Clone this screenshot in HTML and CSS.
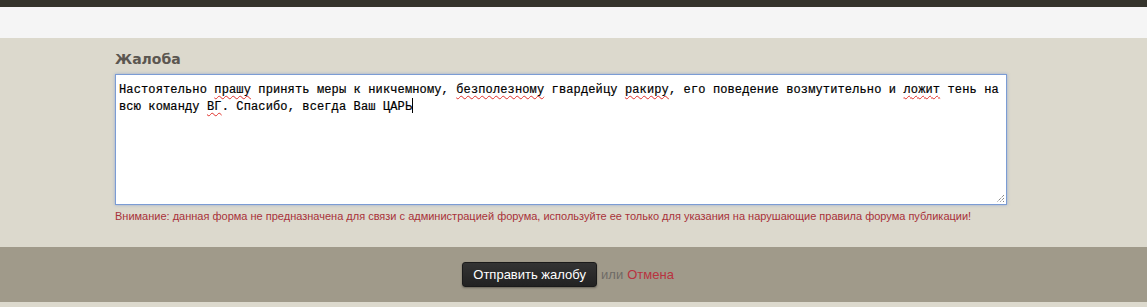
FILE: index.html
```html
<!DOCTYPE html>
<html lang="ru">
<head>
<meta charset="utf-8">
<link rel="stylesheet" href="styles.css">
</head>
<body>
<div class="topbar"></div>
<div class="subbar"></div>
<div class="main">
  <div class="form">
    <label class="label">Жалоба</label>
    <div class="textarea" role="textbox">Настоятельно <span class="err">прашу</span> принять меры к никчемному, <span class="err">безполезному</span> гвардейцу <span class="err">ракиру</span>, его поведение возмутительно и <span class="err">ложит</span> тень на всю команду <span class="err">ВГ</span>. Спасибо, всегда Ваш ЦАРЬ<span class="caret"></span><svg class="grip" width="9" height="9" viewBox="0 0 9 9"><path d="M8 1L1 8M8 4L4 8M8 7L7 8" stroke="#555" stroke-width="1" stroke-dasharray="1 1" fill="none"/></svg></div>
    <p class="warn">Внимание: данная форма не предназначена для связи с администрацией форума, используйте ее только для указания на нарушающие правила форума публикации!</p>
  </div>
</div>
<div class="footer">
  <button class="submit">Отправить жалобу</button>
  <span class="or">или</span>
  <a class="cancel" href="#">Отмена</a>
</div>
<div class="bottom"></div>
</body>
</html>
```
FILE: styles.css
```css
html, body {
  margin: 0;
  padding: 0;
  background: #dcd9cd;
}
.topbar {
  height: 7px;
  background: #35342c;
}
.subbar {
  height: 31px;
  background: #f5f5f5;
}
.main {
  height: 209px;
  background: #dcd9cd;
}
.form {
  margin-left: 115px;
  width: 892px;
  padding-top: 12px;
}
.label {
  display: block;
  font-family: "DejaVu Sans", Verdana, sans-serif;
  font-weight: bold;
  font-size: 14px;
  line-height: 18px;
  color: #5b5650;
  margin-bottom: 6px;
}
.textarea {
  position: relative;
  box-sizing: border-box;
  height: 131px;
  background: #fff;
  border: 1px solid #7b9cd4;
  box-shadow: 0 0 3px rgba(90, 130, 210, 0.5);
  padding: 7px 3px 5px;
  font-family: "Liberation Mono", "Courier New", monospace;
  font-size: 12px;
  letter-spacing: 0.13px;
  line-height: 16px;
  color: #000;
  -webkit-text-stroke: 0.2px #000;
  word-wrap: break-word;
}
.err {
  text-decoration: underline wavy #e0302a;
  text-decoration-thickness: 1px;
  text-underline-offset: 2px;
}
.caret {
  display: inline-block;
  width: 1px;
  height: 15px;
  background: #000;
  vertical-align: -3px;
}
.grip {
  position: absolute;
  right: 1px;
  bottom: 1px;
}
.warn {
  margin: 4px 0 0;
  font-family: "Liberation Sans", Arial, sans-serif;
  font-size: 11px;
  line-height: 14px;
  color: #a8323a;
}
.footer {
  height: 55px;
  background: #a09a8a;
  display: flex;
  align-items: center;
  justify-content: center;
  padding-right: 11px;
  box-sizing: border-box;
  font-family: "Liberation Sans", Arial, sans-serif;
  font-size: 13px;
}
.submit {
  height: 25px;
  width: 135px;
  padding: 0;
  border: 1px solid #1a1a1a;
  border-radius: 3px;
  background: linear-gradient(#333, #222);
  box-shadow: 0 1px 2px rgba(0,0,0,0.35);
  color: #fff;
  font-family: "Liberation Sans", Arial, sans-serif;
  font-size: 13px;
}
.or {
  color: #6e6b66;
  margin-left: 4px;
}
.cancel {
  color: #b8333f;
  text-decoration: none;
  margin-left: 4px;
}
.bottom {
  height: 5px;
  background: #dcd9cd;
}
```
